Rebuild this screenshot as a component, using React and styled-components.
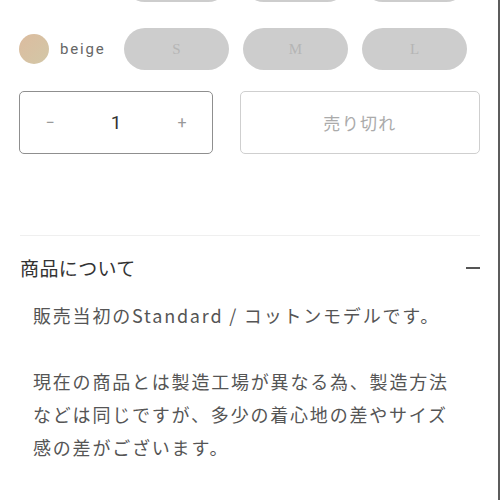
import React from "react";
import styled, { createGlobalStyle } from "styled-components";

const GlobalStyle = createGlobalStyle`
  html, body {
    margin: 0;
    padding: 0;
    background: #fff;
  }
  body {
    font-family: "Noto Sans CJK JP", "Noto Sans", sans-serif;
    overflow: hidden;
  }
`;

const colors = [
  { name: "white", swatch: "#f2f2f2" },
  { name: "beige", swatch: "linear-gradient(135deg, #dcbc9f, #d2c7a7)" },
];

const sizes = ["S", "M", "L"];

const App = () => {
  return (
    <Page>
      <GlobalStyle />
      <ColorList>
        {colors.map((c) => (
          <ColorRow key={c.name}>
            <ColorLabel>
              <Swatch $bg={c.swatch} />
              <span>{c.name}</span>
            </ColorLabel>
            <Pills>
              {sizes.map((s) => (
                <Pill key={s} disabled>
                  {s}
                </Pill>
              ))}
            </Pills>
          </ColorRow>
        ))}
      </ColorList>

      <BuyRow>
        <Quantity>
          <QtyButton>−</QtyButton>
          <QtyValue>1</QtyValue>
          <QtyButton>+</QtyButton>
        </Quantity>
        <SoldOut disabled>売り切れ</SoldOut>
      </BuyRow>

      <Accordion>
        <AccordionHead>
          <h3>商品について</h3>
          <Minus />
        </AccordionHead>
        <Body>
          <p>販売当初のStandard / コットンモデルです。</p>
          <p>
            現在の商品とは製造工場が異なる為、製造方法などは同じですが、多少の着心地の差やサイズ感の差がございます。
          </p>
        </Body>
      </Accordion>
    </Page>
  );
};

const Page = styled.div`
  width: 500px;
  height: 500px;
  box-sizing: border-box;
  border-right: 2px solid #5c5c5c;
  padding: 0 18px 0 19px;
  overflow: hidden;
`;

const ColorList = styled.div`
  display: flex;
  flex-direction: column;
  gap: 26px;
  margin-top: -40px;
`;

const ColorRow = styled.div`
  display: flex;
  align-items: center;
`;

const ColorLabel = styled.div`
  width: 105px;
  display: flex;
  align-items: center;
  gap: 11px;

  span {
    font-family: Roboto, "Noto Sans", sans-serif;
    font-size: 15px;
    letter-spacing: 0.12em;
    color: #666;
  }
`;

const Swatch = styled.div`
  width: 30px;
  height: 30px;
  border-radius: 50%;
  background: ${(p) => p.$bg};
`;

const Pills = styled.div`
  display: flex;
  gap: 14px;
`;

const Pill = styled.button`
  width: 105px;
  height: 42px;
  border: none;
  border-radius: 21px;
  background: #cdcdcd;
  color: #b5b5b5;
  font-family: "Liberation Serif", serif;
  font-size: 15px;
  padding: 0;
`;

const BuyRow = styled.div`
  display: flex;
  gap: 27px;
  margin-top: 21px;
`;

const Quantity = styled.div`
  width: 194px;
  height: 63px;
  box-sizing: border-box;
  border: 1px solid #8f8f8f;
  border-radius: 5px;
  display: flex;
  align-items: center;
  justify-content: space-between;
  padding: 0 20px;
`;

const QtyButton = styled.span`
  width: 20px;
  text-align: center;
  font-family: Roboto, sans-serif;
  font-size: 16px;
  color: #999;
`;

const QtyValue = styled.span`
  font-family: Roboto, sans-serif;
  font-size: 19px;
  color: #333;
`;

const SoldOut = styled.button`
  flex: 1;
  height: 63px;
  border: 1px solid #cfcfcf;
  border-radius: 5px;
  background: #fff;
  color: #ababab;
  font-family: "Noto Sans CJK JP", sans-serif;
  font-size: 17px;
  letter-spacing: 0.08em;
`;

const Accordion = styled.section`
  margin-top: 81px;
  border-top: 1px solid #efefef;
  margin-left: 1px;
`;

const AccordionHead = styled.div`
  display: flex;
  align-items: center;
  justify-content: space-between;
  padding-top: 20px;

  h3 {
    margin: 0;
    font-size: 19px;
    font-weight: 400;
    line-height: 24px;
    letter-spacing: 0.02em;
    color: #333;
  }
`;

const Minus = styled.span`
  width: 14px;
  height: 1.5px;
  background: #555;
`;

const Body = styled.div`
  padding: 19px 20px 0 13px;

  p {
    margin: 0 0 33px;
    font-size: 18px;
    line-height: 33px;
    letter-spacing: 0.1em;
    color: #555;
  }
`;

export default App;
